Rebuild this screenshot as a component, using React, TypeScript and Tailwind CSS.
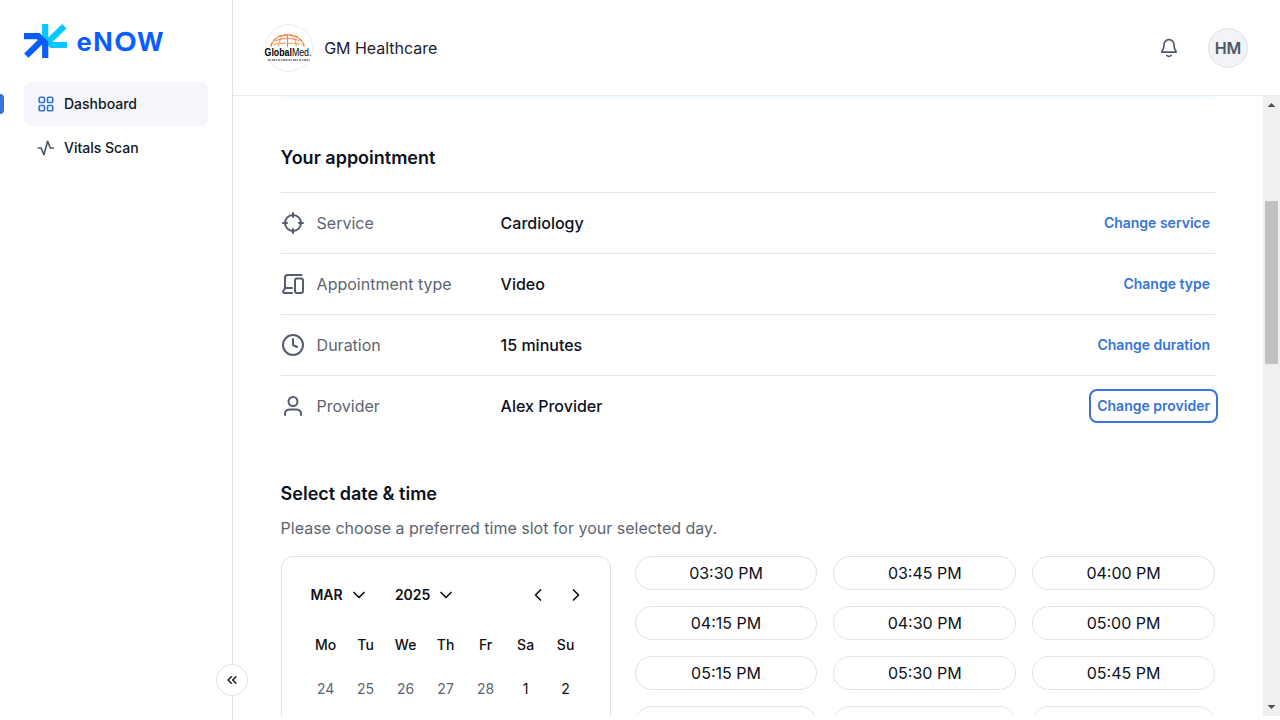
import type { ReactNode } from "react";

type IconProps = { size: number; width?: number; className?: string; children: ReactNode };

function Icon({ size, width = 2, className = "", children }: IconProps) {
  return (
    <svg
      width={size}
      height={size}
      viewBox="0 0 24 24"
      fill="none"
      stroke="currentColor"
      strokeWidth={width}
      strokeLinecap="round"
      strokeLinejoin="round"
      className={"shrink-0 " + className}
    >
      {children}
    </svg>
  );
}

function BrandLogo() {
  return (
    <svg width="144" height="36" viewBox="24 24 144 36" className="block">
      <g fill="none" strokeWidth="6.2">
        <path d="M45.2 24V38.5L51.8 45H67" stroke="#06c8ff" />
        <path d="M64.3 26.3L47.5 42.5" stroke="#06c8ff" />
        <path d="M24 36.2H38.2L45.2 43V58" stroke="#0a5cff" />
        <path d="M26.3 55.6L43 39.2" stroke="#0a5cff" />
      </g>
      <text y="50.600" fontFamily="Inter, sans-serif" fontWeight="700" fontSize="25.600" fill="#0a5cff">
        <tspan x="76.500">e</tspan>
        <tspan x="93.300">N</tspan>
        <tspan x="114.800" fontFamily="Lato, sans-serif" fontSize="26.500" stroke="#0a5cff" strokeWidth="0.500">O</tspan>
        <tspan x="136.900">W</tspan>
      </text>
    </svg>
  );
}

function OrgLogo() {
  return (
    <div className="h-12 w-12 shrink-0 rounded-full border border-[#eaebef]">
      <svg width="46" height="46" viewBox="266 25 46 46" className="block overflow-visible">
        <g fill="none" stroke="#f58233">
          <path d="M270.800 46.500C272.500 39 279.500 34.800 287.500 34.800C295.500 34.800 302.500 39 304.200 46.500" strokeWidth="1.400" strokeDasharray="5 0.700" />
          <path d="M275.500 40.800C282 37.800 293 37.800 299.500 40.800" strokeWidth="1" />
          <path d="M273 44.800C281 42.500 294 42.500 302 44.800" strokeWidth="0.900" strokeDasharray="6 1" />
          <path d="M287.500 34.500V47" strokeWidth="1" />
          <path d="M284.500 35C280.500 37.500 279 41 278.800 46.500M290.500 35C294.500 37.500 296 41 296.200 46.500" strokeWidth="0.900" />
        </g>
        <text x="264.600" y="56" fontFamily="Liberation Sans, Arial, sans-serif" fontSize="10" fill="#000" textLength="46.800" lengthAdjust="spacingAndGlyphs">
          <tspan fontWeight="700">Global</tspan>
          <tspan>Med.</tspan>
        </text>
        <path d="M267.800 60H310" stroke="#222" strokeWidth="1" strokeDasharray="2 .6 1 .8 3 .5 1.500 1" />
      </svg>
    </div>
  );
}

const rows = [
  {
    label: "Service",
    value: "Cardiology",
    action: "Change service",
    icon: (
      <>
        <circle cx="12" cy="12" r="8" />
        <path d="M22 12H18M6 12H2M12 6V2M12 22V18" />
      </>
    ),
  },
  {
    label: "Appointment type",
    value: "Video",
    action: "Change type",
    icon: (
      <>
        <path d="M20.500 3H6.500C4.900 3 4 3.900 4 5.500V16M11 16H4L2.300 19.200C1.900 20.100 2.300 21 3.200 21H11" />
        <rect x="14" y="6.500" width="8" height="14.500" rx="2" />
      </>
    ),
  },
  {
    label: "Duration",
    value: "15 minutes",
    action: "Change duration",
    icon: (
      <>
        <circle cx="12" cy="12" r="10" />
        <path d="M12 6V12L16 14" />
      </>
    ),
  },
  {
    label: "Provider",
    value: "Alex Provider",
    action: "Change provider",
    focused: true,
    icon: (
      <>
        <circle cx="12" cy="7.500" r="4.500" />
        <path d="M20 21C20 19.604 20 18.907 19.828 18.339C19.440 17.060 18.440 16.060 17.161 15.672C16.593 15.500 15.896 15.500 14.500 15.500H9.500C8.104 15.500 7.407 15.500 6.839 15.672C5.560 16.060 4.560 17.060 4.172 18.339C4 18.907 4 19.604 4 21" />
      </>
    ),
  },
];

const weekdays = ["Mo", "Tu", "We", "Th", "Fr", "Sa", "Su"];
const days = [24, 25, 26, 27, 28, 1, 2];
const slots = [
  "03:30 PM", "03:45 PM", "04:00 PM",
  "04:15 PM", "04:30 PM", "05:00 PM",
  "05:15 PM", "05:30 PM", "05:45 PM",
  "", "", "",
];

function Sidebar() {
  return (
    <aside className="relative z-10 flex w-[233px] shrink-0 flex-col border-r border-[#e1e2ea] px-6 pt-6">
      <BrandLogo />
      <nav className="mt-[22px] flex w-[184px] flex-col text-sm font-medium text-[#101623]">
        <a className="relative flex h-11 items-center gap-[9px] rounded-lg bg-[#f5f6fb] pl-[13px]">
          <span className="absolute top-3 -left-6 h-5 w-1 rounded-r-[4px] bg-[#3574d9]" />
          <Icon size={18} width={2.2} className="text-[#3574d9]">
            <rect x="3" y="3" width="7" height="7" rx="1.500" />
            <rect x="14" y="3" width="7" height="7" rx="1.500" />
            <rect x="14" y="14" width="7" height="7" rx="1.500" />
            <rect x="3" y="14" width="7" height="7" rx="1.500" />
          </Icon>
          Dashboard
        </a>
        <a className="flex h-11 items-center gap-[9px] pl-[13px]">
          <Icon size={18} width={2.2} className="text-[#4d576a]">
            <path d="M2 12H5.500L9.200 21L14.200 3L17.700 12H22" />
          </Icon>
          Vitals Scan
        </a>
      </nav>
      <button className="absolute top-[664px] -right-4 flex h-8 w-8 items-center justify-center rounded-full border border-[#e1e2ea] bg-white text-[#101010]">
        <Icon size={16}>
          <path d="M11 17L6 12L11 7M18 17L13 12L18 7" />
        </Icon>
      </button>
    </aside>
  );
}

function Header() {
  return (
    <header className="flex h-24 shrink-0 items-center border-b border-[#e9eaee] pr-8 pl-8">
      <OrgLogo />
      <span className="ml-[11.200px] text-base tracking-[-0.03px] text-[#1d2230]">GM Healthcare</span>
      <Icon size={20} className="mr-[29px] ml-auto text-[#4d576a]">
        <path d="M9.354 21C10.059 21.622 10.986 22 12 22C13.014 22 13.941 21.622 14.646 21M18 8C18 6.409 17.368 4.883 16.243 3.757C15.117 2.632 13.591 2 12 2C10.409 2 8.883 2.632 7.757 3.757C6.632 4.883 6 6.409 6 8C6 11.090 5.220 13.206 4.350 14.605C3.615 15.786 3.248 16.376 3.261 16.541C3.276 16.723 3.315 16.793 3.462 16.902C3.594 17 4.193 17 5.389 17H18.611C19.807 17 20.406 17 20.538 16.902C20.685 16.793 20.724 16.723 20.739 16.541C20.752 16.376 20.385 15.786 19.650 14.605C18.780 13.206 18 11.090 18 8Z" />
      </Icon>
      <div className="flex h-10 w-10 items-center justify-center rounded-full border border-[#e1e2e8] bg-[#f2f4f8] text-base font-semibold text-[#4d576a]">
        HM
      </div>
    </header>
  );
}

function Calendar() {
  return (
    <div className="h-[400px] w-[330px] shrink-0 rounded-xl border border-[#e1e2ea] px-6 pt-[18px] text-sm text-[#101010]">
      <div className="flex h-10 items-center pl-[4.800px] font-semibold">
        <span className="w-[38.500px]">MAR</span>
        <Icon size={20}>
          <path d="M6 9L12 15L18 9" />
        </Icon>
        <span className="ml-[26px] w-[41px]">2025</span>
        <Icon size={20}>
          <path d="M6 9L12 15L18 9" />
        </Icon>
        <Icon size={20} className="ml-auto">
          <path d="M15 18L9 12L15 6" />
        </Icon>
        <Icon size={20} className="ml-[18px]">
          <path d="M9 18L15 12L9 6" />
        </Icon>
      </div>
      <div className="mt-[10px] grid w-[280px] grid-cols-7 text-center font-medium">
        {weekdays.map((d) => (
          <span key={d} className="leading-10">{d}</span>
        ))}
      </div>
      <div className="mt-1 grid w-[280px] grid-cols-7 text-center">
        {days.map((d) => (
          <span key={d} className={d > 20 ? "leading-10 text-[#5d6470]" : "leading-10"}>{d}</span>
        ))}
      </div>
    </div>
  );
}

function Scrollbar() {
  return (
    <div className="flex w-[17px] shrink-0 flex-col items-center bg-[#f0f0f0]">
      <svg width="17" height="17" className="block shrink-0">
        <path d="M4.500 11H12.500L8.500 7Z" fill="#505050" />
      </svg>
      <div className="mt-[88px] h-[163px] w-[13px] bg-[#c1c1c1]" />
      <svg width="17" height="17" className="mt-auto block shrink-0">
        <path d="M4.500 6H12.500L8.500 10Z" fill="#505050" />
      </svg>
    </div>
  );
}

export default function App() {
  return (
    <div className="flex h-[720px] w-[1280px] overflow-hidden bg-white font-[Inter,sans-serif] text-[#0c111d]">
      <Sidebar />
      <div className="flex min-w-0 flex-1 flex-col">
        <Header />
        <div className="flex h-[620px]">
          <main className="flex-1 overflow-hidden pr-12 pl-[47.600px]">
            <div className="h-1 rounded-b-lg bg-[#f5fbff]" />
            <h2 className="mt-11 text-lg leading-7 font-semibold">Your appointment</h2>
            <div className="mt-5">
              {rows.map((r) => (
                <div key={r.label} className="flex h-[61px] items-center border-t border-[#e1e2ea]">
                  <Icon size={24} className="text-[#555d6d]">{r.icon}</Icon>
                  <span className="ml-3 w-[184px] text-base text-[#5d6470]">{r.label}</span>
                  <span className="text-base font-medium">{r.value}</span>
                  <button
                    className={
                      "mr-[-3px] ml-auto h-[34px] rounded-lg border-2 px-1.5 text-sm font-semibold text-[#3574d9] " +
                      (r.focused ? "border-[#3574d9]" : "border-transparent")
                    }
                  >
                    {r.action}
                  </button>
                </div>
              ))}
            </div>
            <h2 className="mt-11 text-lg leading-7 font-semibold">Select date &amp; time</h2>
            <p className="mt-2 text-base leading-6 text-[#5d6470]">
              Please choose a preferred time slot for your selected day.
            </p>
            <div className="mt-4 flex items-start gap-6">
              <Calendar />
              <div className="grid flex-1 grid-cols-3 gap-4">
                {slots.map((s, i) => (
                  <button key={i} className="h-[34px] rounded-full border border-[#e1e2ea] text-base">
                    {s}
                  </button>
                ))}
              </div>
            </div>
          </main>
          <Scrollbar />
        </div>
      </div>
    </div>
  );
}
